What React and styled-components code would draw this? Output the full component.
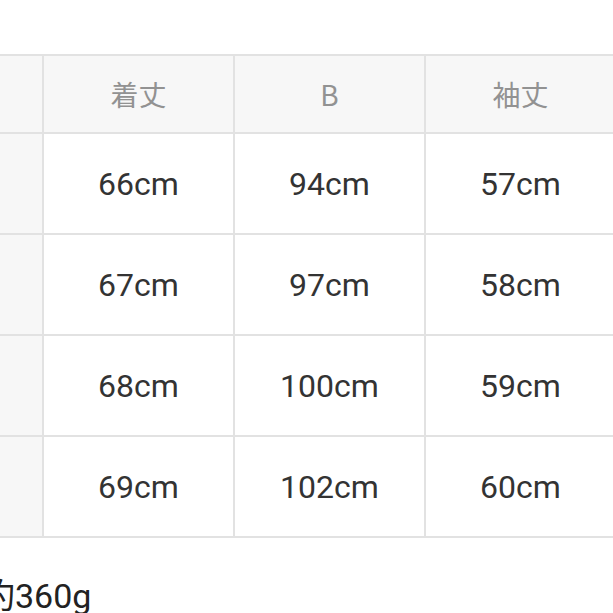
import React from "react";
import styled, { createGlobalStyle } from "styled-components";

const GlobalStyle = createGlobalStyle`
  html, body { margin:0; padding:0; background:#fff; }
  body { width:613px; height:613px; overflow:hidden; font-family: Roboto, "Noto Sans CJK JP", sans-serif; }
`;

const headers = ["", "着丈", "B", "袖丈"];
const rows = [
  ["", "66cm", "94cm", "57cm"],
  ["", "67cm", "97cm", "58cm"],
  ["", "68cm", "100cm", "59cm"],
  ["", "69cm", "102cm", "60cm"],
];

export default function App() {
  return (
    <Page>
      <GlobalStyle />
      <Table>
        {headers.map((h, i) => (
          <HeadCell key={"h" + i}>{h}</HeadCell>
        ))}
        {rows.map((r, ri) =>
          r.map((c, ci) => (
            <Cell key={ri + "-" + ci} $label={ci === 0}>{c}</Cell>
          ))
        )}
      </Table>
      <Note>約360g</Note>
    </Page>
  );
}

const Page = styled.div`
  width:613px; height:613px; overflow:hidden;
  display:flex; flex-direction:column;
  padding-top:54px; box-sizing:border-box;
`;

const Table = styled.div`
  display:grid;
  grid-template-columns: repeat(4, 189px);
  grid-template-rows: 76px repeat(4, 99px);
  gap:2px;
  padding:2px 0;
  background:#e2e2e2;
  margin-left:-147px;
  width:max-content;
`;

const HeadCell = styled.div`
  background:#f7f7f7;
  display:flex; align-items:center; justify-content:center;
  font-family: "Noto Sans CJK JP", sans-serif;
  font-size:28px; color:#929292;
`;

const Cell = styled.div`
  background:${p => (p.$label ? "#f7f7f7" : "#fff")};
  display:flex; align-items:center; justify-content:center;
  font-family: Roboto, sans-serif;
  font-size:32px; color:#333;
`;

const Note = styled.div`
  margin-top:41px;
  margin-left:-19px;
  font-family: Roboto, "Noto Sans CJK JP", sans-serif;
  font-size:34px; line-height:1; color:#222;
  white-space:nowrap;
`;
